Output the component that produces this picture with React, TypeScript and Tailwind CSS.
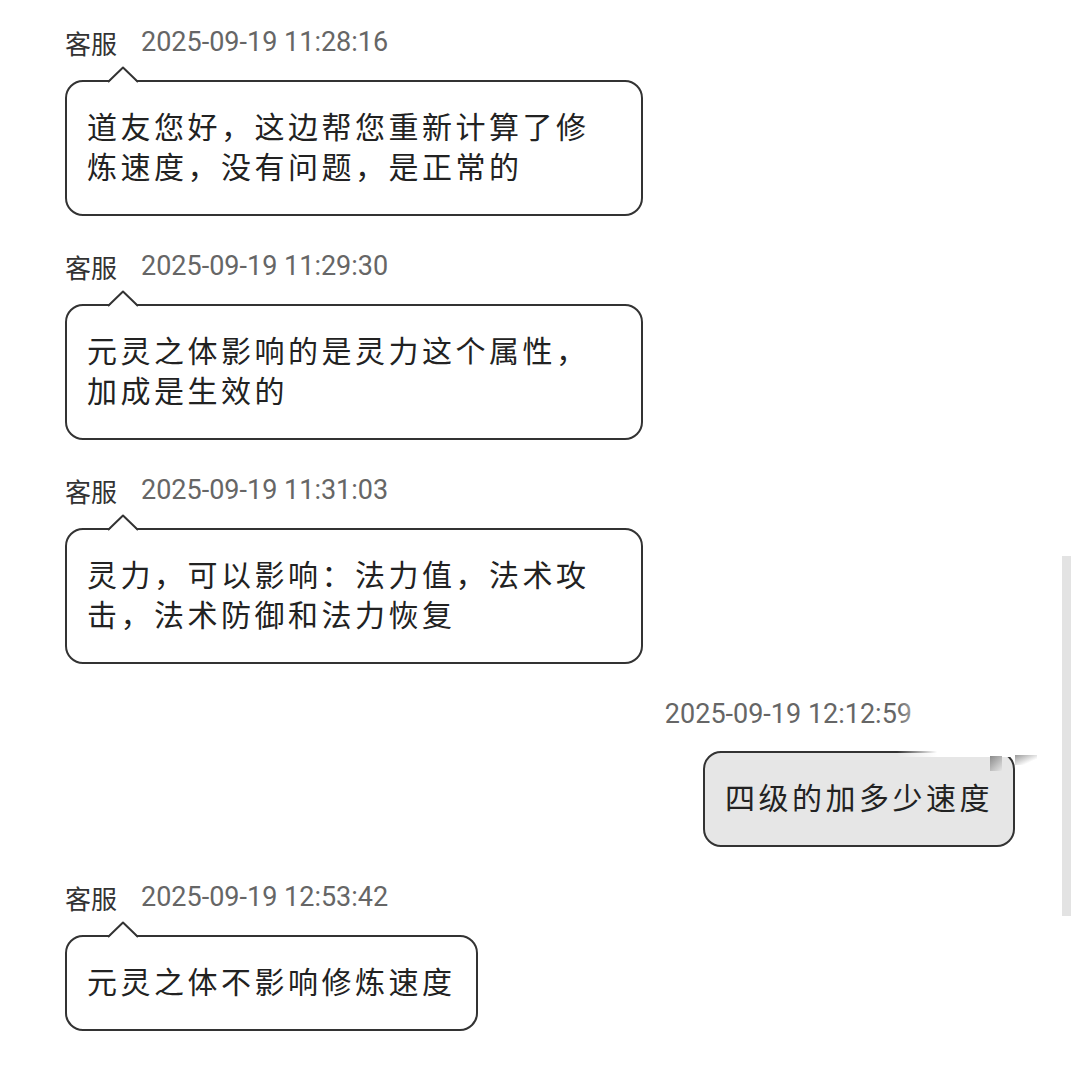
import React from 'react';

const cjk = { fontFamily: '"Noto Sans CJK SC", "Noto Sans", sans-serif' };
const num = { fontFamily: 'Roboto, "Noto Sans", sans-serif' };

interface Msg {
  from: 'staff' | 'me';
  time: string;
  text: string;
}

const messages: Msg[] = [
  { from: 'staff', time: '2025-09-19 11:28:16', text: '道友您好，这边帮您重新计算了修炼速度，没有问题，是正常的' },
  { from: 'staff', time: '2025-09-19 11:29:30', text: '元灵之体影响的是灵力这个属性，加成是生效的' },
  { from: 'staff', time: '2025-09-19 11:31:03', text: '灵力，可以影响：法力值，法术攻击，法术防御和法力恢复' },
  { from: 'me', time: '2025-09-19 12:12:59', text: '四级的加多少速度' },
  { from: 'staff', time: '2025-09-19 12:53:42', text: '元灵之体不影响修炼速度' },
];

const bubble =
  'relative w-fit max-w-[578px] rounded-[18px] border-2 border-[#333] px-[20px] pt-[23px] pb-[29px] text-[30px] leading-[40px] tracking-[3.5px] text-[#222]';

function Tail() {
  return (
    <svg className="absolute left-[40px] top-[-16px]" width="32" height="18" viewBox="0 0 32 18">
      <path d="M1 17 L16 2 L31 17 Z" fill="white" />
      <path d="M1 16 L16 1.5 L31 16" fill="none" stroke="#333" strokeWidth="2" strokeLinejoin="round" />
    </svg>
  );
}

function StaffMessage({ msg }: { msg: Msg }) {
  return (
    <div className="flex flex-col gap-[23px]">
      <div className="flex h-[30px] items-center gap-[24px]">
        <span className="text-[26px] text-[#333]" style={cjk}>
          客服
        </span>
        <span className="text-[27px] text-[#666]" style={num}>
          {msg.time}
        </span>
      </div>
      <div className={`${bubble} bg-white`} style={cjk}>
        <Tail />
        {msg.text}
      </div>
    </div>
  );
}

function MyMessage({ msg }: { msg: Msg }) {
  return (
    <div className="flex flex-col items-end gap-[22px] pr-[65px]">
      <div className="mr-[103px] flex h-[30px] items-center">
        <span className="text-[27px] text-[#666]" style={num}>
          {msg.time}
        </span>
      </div>
      <div className={`${bubble} bg-[#e6e6e6]`} style={cjk}>
        {msg.text}
        {/* folded corner artefact */}
        <div className="absolute right-[-4px] top-[-54px] h-[58px] w-[120px] bg-[linear-gradient(to_right,rgba(255,255,255,0),#fff_40px)]" />
        <div className="absolute right-[11px] top-[3px] h-[15px] w-[12px] bg-[linear-gradient(135deg,#8a8a8a,#e6e6e6)]" />
        <div className="absolute right-[-24px] top-[2px] h-[10px] w-[22px] bg-[linear-gradient(to_bottom_right,#9a9a9a,rgba(255,255,255,0)_70%)]" />
      </div>
    </div>
  );
}

export default function App() {
  return (
    <div className="relative flex min-h-[1072px] w-[1080px] flex-col gap-[35px] overflow-hidden bg-white pt-[27px] pl-[65px]">
      {messages.map((m, i) =>
        m.from === 'staff' ? <StaffMessage key={i} msg={m} /> : <MyMessage key={i} msg={m} />
      )}

      {/* scrollbar */}
      <div className="absolute left-[1062px] top-[556px] h-[360px] w-[9px] bg-[#e3e3e3]" />
    </div>
  );
}
